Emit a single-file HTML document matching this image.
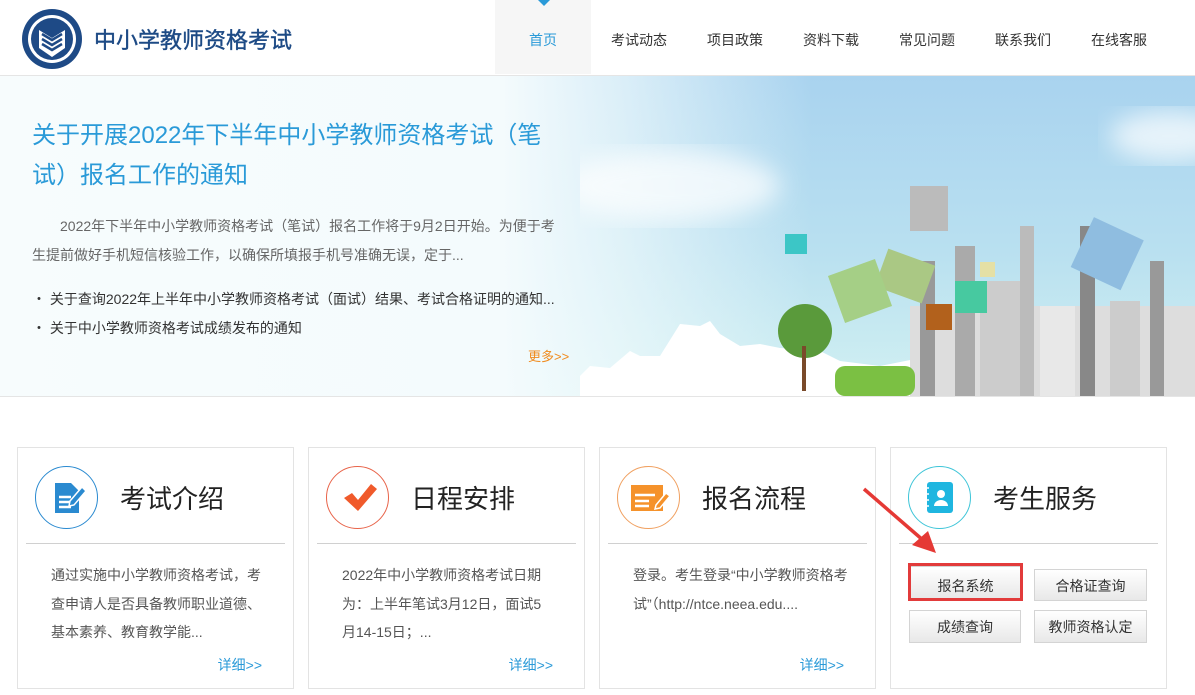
<!DOCTYPE html>
<html><head><meta charset="utf-8"><style>
*{margin:0;padding:0;box-sizing:border-box}
body{width:1195px;height:695px;overflow:hidden;background:#fff;font-family:"Liberation Sans","Noto Sans CJK SC",sans-serif;position:relative}
.abs{position:absolute}
.nav{position:absolute;top:30px;font-size:14px;color:#333;white-space:nowrap}
.card{position:absolute;top:447px;width:277px;height:242px;border:1px solid #e3e3e3;background:#fff}
.card .ic{position:absolute;left:17px;top:18px;width:63px;height:63px;border-radius:50%;border:1px solid}
.card .tt{position:absolute;left:102px;top:31px;font-size:26px;color:#222;white-space:nowrap}
.card .hr{position:absolute;left:8px;right:8px;top:95px;border-top:1px solid #d0d0d0}
.card .tx{position:absolute;left:33px;top:113px;width:215px;font-size:14px;color:#555;line-height:28.5px}
.card .mo{position:absolute;right:31px;top:207px;font-size:14px;color:#2a9ad8}
.btn{position:absolute;border:1px solid #d4d4d4;background:linear-gradient(#fff,#e8e8e8);font-size:14px;color:#333;text-align:center;line-height:33px}
</style></head><body>
<svg class="abs" style="left:21px;top:8px" width="62" height="62" viewBox="0 0 62 62">
<circle cx="31" cy="31" r="30" fill="#1e4a86"/><circle cx="31" cy="31" r="24" fill="#fff"/><circle cx="31" cy="31" r="21" fill="#1e4a86"/>
<path d="M18 22l13 8 13-8v18l-13 9-13-9z" fill="#fff"/><path d="M21 26l10 6 10-6M21 31l10 6 10-6M21 36l10 6 10-6" stroke="#1e4a86" stroke-width="2.5" fill="none"/>
</svg>
<div class="abs" style="left:94px;top:23px;font-size:22px;color:#1d4a85;font-weight:normal;-webkit-text-stroke:0.4px #1d4a85">中小学教师资格考试</div>
<div class="abs" style="left:495px;top:0;width:96px;height:74px;background:#f6f6f6"></div>
<svg class="abs" style="left:538px;top:0" width="12" height="6"><path d="M0 0h12L6 6z" fill="#2a9ad8"/></svg>
<div class="nav" style="left:529px;color:#2a9ad8">首页</div>
<div class="nav" style="left:611px">考试动态</div>
<div class="nav" style="left:707px">项目政策</div>
<div class="nav" style="left:803px">资料下载</div>
<div class="nav" style="left:899px">常见问题</div>
<div class="nav" style="left:995px">联系我们</div>
<div class="nav" style="left:1091px">在线客服</div>
<div class="abs" style="left:0;top:75px;width:1195px;height:1px;background:#e5e5e5"></div>
<div class="abs" style="left:0;top:76px;width:1195px;height:320px;background:linear-gradient(180deg,#a9d3ef 0%,#b9e0f0 55%,#d2f1f2 100%)"></div>
<div class="abs" style="left:0;top:76px;width:1195px;height:320px;background:linear-gradient(90deg,#f7fcfd 0%,#f4fbfd 42%,rgba(240,250,252,.7) 52%,rgba(255,255,255,0) 68%)"></div>
<svg class="abs" style="left:580px;top:76px" width="615" height="320">
<defs><filter id="b"><feGaussianBlur stdDeviation="12"/></filter></defs>
<ellipse cx="90" cy="110" rx="110" ry="35" fill="#fff" opacity=".7" filter="url(#b)"/>
<ellipse cx="590" cy="60" rx="60" ry="25" fill="#fff" opacity=".7" filter="url(#b)"/>
<path d="M0 300 L10 290 30 292 50 275 60 280 80 280 100 248 120 250 130 245 140 258 160 270 180 268 200 272 240 275 260 285 300 290 350 280 380 300 380 320 0 320z" fill="#fff"/>
<rect x="330" y="230" width="285" height="90" fill="#ddd"/>
<rect x="340" y="185" width="15" height="135" fill="#999"/><rect x="375" y="170" width="20" height="150" fill="#aaa"/><rect x="400" y="205" width="50" height="115" fill="#ccc"/><rect x="440" y="150" width="14" height="170" fill="#bbb"/><rect x="460" y="230" width="35" height="90" fill="#e8e8e8"/><rect x="500" y="150" width="15" height="170" fill="#888"/><rect x="530" y="225" width="30" height="95" fill="#ccc"/><rect x="570" y="185" width="14" height="135" fill="#999"/>
<rect x="255" y="290" width="80" height="30" fill="#7bc043" rx="10"/>
<circle cx="225" cy="255" r="27" fill="#5a9a3b"/><rect x="222" y="270" width="4" height="45" fill="#7a4a2a"/>
<rect x="330" y="110" width="38" height="45" fill="#bbb"/><rect x="300" y="180" width="50" height="40" fill="#aac884" transform="rotate(20 325 200)"/>
<rect x="255" y="190" width="50" height="50" fill="#a5cf86" transform="rotate(-20 280 215)"/><rect x="205" y="158" width="22" height="20" fill="#3cc6c6"/>
<rect x="500" y="150" width="55" height="55" fill="#8fbde0" transform="rotate(25 527 177)"/><rect x="375" y="205" width="32" height="32" fill="#47c9a0"/><rect x="346" y="228" width="26" height="26" fill="#b2611c"/><rect x="400" y="186" width="15" height="15" fill="#e5e0a5"/>
</svg>
<div class="abs" style="left:0;top:396px;width:1195px;height:1px;background:#e5e5e5"></div>
<div class="abs" style="left:32px;top:116px;width:530px;font-size:24px;line-height:40px;color:#2a9ad8">关于开展2022年下半年中小学教师资格考试（笔试）报名工作的通知</div>
<div class="abs" style="left:32px;top:212px;width:530px;font-size:14px;line-height:28.5px;color:#666;text-indent:28px">2022年下半年中小学教师资格考试（笔试）报名工作将于9月2日开始。为便于考生提前做好手机短信核验工作，以确保所填报手机号准确无误，定于...</div>
<div class="abs" style="left:32px;top:285px;font-size:14px;color:#333;line-height:29px;white-space:nowrap">・ 关于查询2022年上半年中小学教师资格考试（面试）结果、考试合格证明的通知...<br>・ 关于中小学教师资格考试成绩发布的通知</div>
<div class="abs" style="left:528px;top:346px;font-size:13px;color:#f08a1c">更多&gt;&gt;</div>
<div class="card" style="left:17px"><div class="ic" style="border-color:#2a8ad0"><svg width="61" height="61"><path d="M19 16h16l8 8v22H19z" fill="#2a8ad0"/><path d="M23 30h12M23 35h12M23 40h12" stroke="#fff" stroke-width="2.5"/><path d="M34 34l12-14 4 4-12 14-5 1z" fill="#2a8ad0" stroke="#fff" stroke-width="1.5"/></svg></div><div class="tt">考试介绍</div><div class="hr"></div><div class="tx">通过实施中小学教师资格考试，考查申请人是否具备教师职业道德、基本素养、教育教学能...</div><div class="mo">详细&gt;&gt;</div></div>
<div class="card" style="left:308px"><div class="ic" style="border-color:#e8644a"><svg width="61" height="61"><path d="M17 31l8-5 6 7 13-16 6 5-19 22z" fill="#f05a2b"/></svg></div><div class="tt">日程安排</div><div class="hr"></div><div class="tx" style="width:208px">2022年中小学教师资格考试日期为：上半年笔试3月12日，面试5月14-15日；...</div><div class="mo">详细&gt;&gt;</div></div>
<div class="card" style="left:599px"><div class="ic" style="border-color:#f0a060"><svg width="61" height="61"><rect x="13" y="18" width="32" height="26" fill="#f5922b"/><path d="M17 28h20M17 34h14M17 39h14" stroke="#fff" stroke-width="2.5"/><path d="M38 38l10-12 4 3-10 12-5 1z" fill="#f5922b" stroke="#fff" stroke-width="1.5"/></svg></div><div class="tt">报名流程</div><div class="hr"></div><div class="tx" style="top:113px">登录。考生登录“中小学教师资格考试”（http://ntce.neea.edu....</div><div class="mo">详细&gt;&gt;</div></div>
<div class="card" style="left:890px"><div class="ic" style="border-color:#3ec5d8"><svg width="61" height="61"><rect x="18" y="15" width="26" height="31" rx="3" fill="#1fb6e0"/><circle cx="32" cy="27" r="4" fill="#fff"/><path d="M25 39a7 6 0 0 1 14 0z" fill="#fff"/><path d="M16 21h4M16 27h4M16 33h4M16 39h4" stroke="#fff" stroke-width="1.5"/></svg></div><div class="tt">考生服务</div><div class="hr"></div></div>
<div class="btn" style="left:910px;top:566px;width:111px;height:33px;line-height:38px">报名系统</div>
<div class="abs" style="left:908px;top:563px;width:115px;height:38px;border:3px solid #e23b3b"></div>
<div class="btn" style="left:1034px;top:569px;width:113px;height:32px">合格证查询</div>
<div class="btn" style="left:909px;top:610px;width:112px;height:33px">成绩查询</div>
<div class="btn" style="left:1034px;top:610px;width:113px;height:33px">教师资格认定</div>
<svg class="abs" style="left:860px;top:485px" width="85" height="75"><path d="M4 4L64 56" stroke="#e53935" stroke-width="3.5"/><path d="M76 68L52 60 68 46z" fill="#e53935"/></svg>
</body></html>
